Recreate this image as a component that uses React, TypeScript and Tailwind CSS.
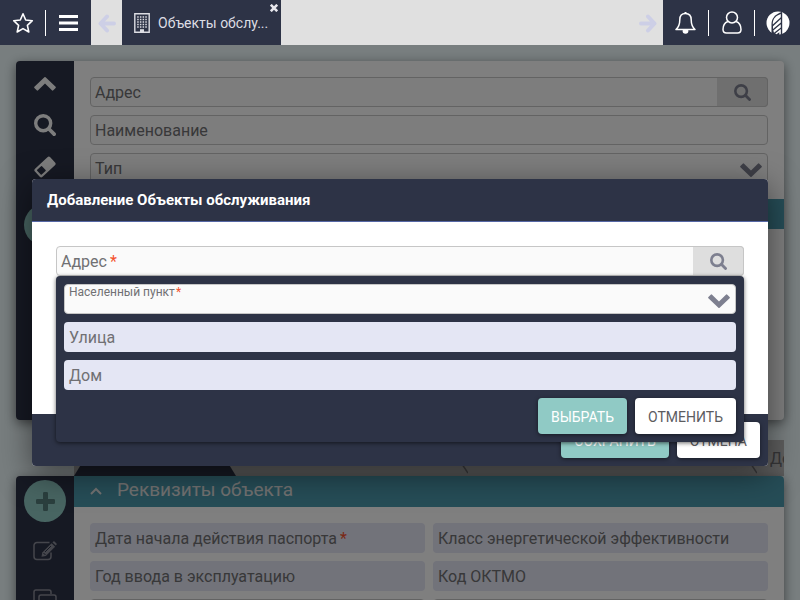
import React from "react";
import { clsx } from "clsx";

const FONT = "font-['Roboto','Noto_Sans',sans-serif]";

type IconProps = { className?: string };

const StarIcon = () => (
  <svg className="size-[22px]" viewBox="0 0 22 22" fill="none" stroke="#fff" strokeWidth="1.600" strokeLinejoin="round">
    <path d="M11 1.800 13.700 8l6.600.7-4.900 4.600 1.400 6.700L11 16.600 5.200 20l1.400-6.700-4.900-4.600L8.300 8Z" />
  </svg>
);

const MenuIcon = () => (
  <svg className="h-4 w-[19px]" viewBox="0 0 19 16" fill="#fff">
    <path d="M0 0h19v3H0zM0 6.500h19v3H0zM0 13h19v3H0z" />
  </svg>
);

const ArrowIcon = ({ className }: IconProps) => (
  <svg className={clsx("h-[19px] w-[18px]", className)} viewBox="0 0 18 19" fill="none" stroke="#cdcfe6" strokeWidth="4" strokeLinecap="round" strokeLinejoin="round">
    <path d="M9 2.500 2.500 9.500 9 16.500M3 9.500h13" />
  </svg>
);

const BuildingIcon = () => (
  <svg className="h-5 w-4" viewBox="0 0 16 20" fill="none" stroke="#dcdde3">
    <path d="M.8.7h14.400v18.600H.8z" strokeWidth="1.400" />
    <path d="M3.200 4h9.600M3.200 6.500h9.600M3.200 9h9.600M3.200 11.500h9.600M3.200 14h9.600" strokeWidth="1.500" strokeDasharray="1.500 1.200" />
    <path d="M6 16.200h4v3H6z" fill="#dcdde3" stroke="none" />
  </svg>
);

const BellIcon = () => (
  <svg className="h-[23px] w-[21px]" viewBox="0 0 21 23" fill="none" stroke="#fff" strokeWidth="1.500" strokeLinejoin="round">
    <path d="M10.500 2.500c-4 0-5.700 2.800-5.700 6.200 0 5.300-1 7.300-3.800 9.800h19c-2.800-2.500-3.800-4.500-3.800-9.800 0-3.400-1.700-6.200-5.700-6.200Z" />
    <path d="M9.500 1h2v1.500h-2z" fill="#fff" stroke="none" />
    <path d="M8.300 19.700a2.200 2.200 0 0 0 4.400 0Z" fill="#fff" />
  </svg>
);

const UserIcon = () => (
  <svg className="h-[23px] w-5" viewBox="0 0 20 23" fill="none" stroke="#fff" strokeWidth="1.500" strokeLinejoin="round">
    <circle cx="10" cy="6.500" r="5.500" />
    <path d="M5.800 10.500C2.500 11.800 1 14.800 1 18.500 1 21 2.200 22 4.500 22h11c2.300 0 3.500-1 3.500-3.500 0-3.700-1.500-6.700-4.800-8" />
  </svg>
);

const LogoIcon = () => (
  <svg className="size-6" viewBox="0 0 24 24">
    <circle cx="12" cy="12" r="11.500" fill="#fff" />
    <path d="M5.500 24V13C5.500 7.500 9 3.500 16.200.8V24" fill="#2d3346" />
    <path d="M6.800 12c.4-4.500 3.200-7.500 8-9v3.200L6.800 13.500ZM7 18v-2.700l7.800-7.200v3.400ZM8 21.800l-.7-2.300 7.500-6.200v3.200ZM10.500 23.300l-1.300-.8 5.600-4.500v5.200l-1.500.4v-2.300Z" fill="#fff" />
  </svg>
);

const SearchIcon = ({ className }: IconProps) => (
  <svg className={className} viewBox="0 0 22 22" fill="none" stroke="currentColor" strokeLinecap="round">
    <circle cx="9.200" cy="9.200" r="7.500" strokeWidth="3.400" />
    <path d="m15 15 5.100 5.100" strokeWidth="3.700" />
  </svg>
);

const ChevronIcon = ({ className }: IconProps) => (
  <svg className={clsx("h-[14px] w-[22px]", className)} viewBox="0 0 22 14" fill="currentColor">
    <path d="M.4 3 2.700.7a1 1 0 0 1 1.400 0L11 7.500 17.900.7a1 1 0 0 1 1.400 0L21.600 3a1 1 0 0 1 0 1.300L11.600 13.700a.9.900 0 0 1-1.200 0L.4 4.300A1 1 0 0 1 .4 3Z" />
  </svg>
);

const EraserIcon = () => (
  <svg className="size-[22px]" viewBox="0 0 20 20">
    <g transform="rotate(-43 10 10)">
      <rect x=".5" y="5" width="19" height="10" rx="1.800" fill="currentColor" />
      <rect x="2.500" y="7" width="6" height="6" rx=".6" fill="#2d3346" />
    </g>
  </svg>
);

const PlusIcon = () => (
  <svg className="size-[19px]" viewBox="0 0 19 19" fill="#577f7c">
    <path d="M7 1.200Q7 0 8.200 0h2.600Q12 0 12 1.200V7h5.800Q19 7 19 8.200v2.600q0 1.200-1.200 1.200H12v5.800q0 1.200-1.200 1.200H8.200Q7 19 7 17.800V12H1.200Q0 12 0 10.800V8.200Q0 7 1.200 7H7Z" />
  </svg>
);

const EditIcon = () => (
  <svg className="h-5 w-6" viewBox="0 0 24 20" fill="none" stroke="currentColor" strokeWidth="1.500">
    <path d="M16.500 1.500H4A3 3 0 0 0 1 4.500v11a3 3 0 0 0 3 3h11a3 3 0 0 0 3-3v-4" />
    <path d="m8.500 15.800.8-4.300L18.600 2.200l3.500 3.500-9.300 9.300Z" fill="currentColor" stroke="none" />
    <path d="m19.500 1.400.8-.8q.6-.5 1.200 0l2 2q.5.600 0 1.200l-.7.8Z" fill="currentColor" stroke="none" />
    <path d="m10.500 12 2 2M12 11l6-6" stroke="#2d3346" strokeWidth="1" />
  </svg>
);

const CopyIcon = () => (
  <svg className="size-6" viewBox="0 0 24 24" fill="none" stroke="currentColor" strokeWidth="1.500">
    <path d="M5 17H3a2 2 0 0 1-2-2V3a2 2 0 0 1 2-2h13a2 2 0 0 1 2 2v2" />
    <rect x="6" y="6" width="17" height="17" rx="2" />
  </svg>
);

type FieldProps = {
  id: string;
  label: string;
  required?: boolean;
  tone?: "outline" | "lilac";
  small?: boolean;
  kind?: "text" | "select" | "search";
};

function Field({ id, label, required, tone = "outline", small, kind = "text" }: FieldProps) {
  const box = clsx(
    "col-start-1 row-start-1 h-[30px] w-full min-w-0 appearance-none rounded px-[5px] outline-none",
    tone === "lilac" ? "bg-[#e4e6f4]" : "border border-[#c6c6c6] bg-[#fafafa]",
  );
  return (
    <div className="grid min-w-0">
      {kind === "select" ? (
        <select id={id} className={box} defaultValue="">
          <option value="" />
        </select>
      ) : (
        <input id={id} type="text" className={box} />
      )}
      <label
        htmlFor={id}
        className={clsx(
          "z-10 col-start-1 row-start-1 flex justify-self-start pl-[5px] whitespace-nowrap text-[#707073]",
          small ? "gap-px self-start text-xs leading-4" : "gap-[3px] self-center pt-[2px] text-base leading-6",
        )}
      >
        {label}
        {required && <span className="text-[#f4512c]">*</span>}
      </label>
      {kind === "select" && (
        <span className="pointer-events-none z-10 col-start-1 row-start-1 self-center justify-self-end pt-1 pr-[6px] text-[#7d7f8f]">
          <ChevronIcon />
        </span>
      )}
      {kind === "search" && (
        <button
          type="button"
          aria-label="Поиск"
          className="z-10 col-start-1 row-start-1 grid w-[51px] place-items-center justify-self-end rounded-r border-y border-r border-[#c6c6c6] bg-[#dedede] text-[#7d7f8f]"
        >
          <SearchIcon className="size-[17px]" />
        </button>
      )}
    </div>
  );
}

function PlusButton() {
  return (
    <button type="button" aria-label="Добавить" className="grid size-[42px] shrink-0 place-items-center rounded-full bg-[#90cac5]">
      <PlusIcon />
    </button>
  );
}

function ActionButton({ children, primary }: { children: React.ReactNode; primary?: boolean }) {
  return (
    <button
      type="button"
      className={clsx(
        "h-9 rounded px-[13px] pt-px text-sm leading-9 shadow-[0_1px_4px_rgba(0,0,0,0.5)]",
        primary ? "bg-[#90cac5] text-white" : "bg-white text-[#5c5c5f]",
      )}
    >
      {children}
    </button>
  );
}

const Divider = () => <span className="h-[26px] w-px bg-white" />;
const headerButton = "grid h-full place-items-center";

function Header() {
  return (
    <header className="flex h-[45px] shrink-0 bg-[#e0e0e0]">
      <div className="flex items-center bg-[#2d3346]">
        <button type="button" aria-label="Избранное" className={clsx(headerButton, "w-[45px]")}><StarIcon /></button>
        <Divider />
        <button type="button" aria-label="Меню" className={clsx(headerButton, "w-[45px]")}><MenuIcon /></button>
      </div>
      <button type="button" aria-label="Назад" className={clsx(headerButton, "w-[31px] pt-[2px]")}><ArrowIcon /></button>
      <div className="relative flex w-[159px] items-center gap-2 bg-[#2d3346] pl-3">
        <BuildingIcon />
        <a href="#objects" className="text-sm text-[#dcdde3]">Объекты обслу...</a>
        <button type="button" aria-label="Закрыть" className="absolute top-1 right-[3px]">
          <svg className="size-2" viewBox="0 0 8 8" stroke="#e8e8ee" strokeWidth="2.600"><path d="m.8.800 6.400 6.400M7.200.8.8 7.200" /></svg>
        </button>
      </div>
      <div className="grow" />
      <button type="button" aria-label="Вперёд" className={clsx(headerButton, "w-[31px] pt-[2px]")}><ArrowIcon className="rotate-180" /></button>
      <div className="flex items-center bg-[#2d3346]">
        <button type="button" aria-label="Уведомления" className={clsx(headerButton, "w-[45px]")}><BellIcon /></button>
        <Divider />
        <button type="button" aria-label="Профиль" className={clsx(headerButton, "w-[45px]")}><UserIcon /></button>
        <Divider />
        <a href="#home" aria-label="Главная" className={clsx(headerButton, "w-[45px]")}><LogoIcon /></a>
      </div>
    </header>
  );
}

const cardShadow = "shadow-[0_3px_12px_rgba(0,0,0,0.5)]";
const iconButton = "grid h-[42px] w-full shrink-0 place-items-center";

function FilterCard() {
  return (
    <section className={clsx("flex h-[359px] shrink-0 overflow-hidden rounded bg-white", cardShadow)}>
      <nav className="flex w-[58px] shrink-0 flex-col items-center bg-[#2d3346] pt-px text-[#fafafa]">
        <button type="button" aria-label="Свернуть" className={clsx(iconButton, "pt-[2px]")}><ChevronIcon className="rotate-180" /></button>
        <button type="button" aria-label="Найти" className={iconButton}><SearchIcon className="size-[22px]" /></button>
        <button type="button" aria-label="Очистить" className={iconButton}><EraserIcon /></button>
        <div className="pt-4"><PlusButton /></div>
      </nav>
      <div className="min-w-0 grow">
        <form className="flex flex-col gap-2 p-4">
          <Field id="filter-address" label="Адрес" kind="search" />
          <Field id="filter-name" label="Наименование" />
          <Field id="filter-type" label="Тип" kind="select" />
        </form>
        <div className="h-[30px] bg-[#4c9aae]" />
      </div>
    </section>
  );
}

function SectionTabs() {
  return (
    <div className="mt-5 ml-[58px] flex h-9 shrink-0 overflow-hidden bg-[#bdbdbd] text-base whitespace-nowrap text-[#6c6c70]">
      <div className="w-[162px] shrink-0 bg-[#2d3346] [clip-path:polygon(22px_0,140px_0,100%_100%,0_100%)]" />
      <svg className="h-9 w-[232px] shrink-0" viewBox="0 0 232 36" fill="none" stroke="#77777a" strokeWidth="1.500"><path d="m210 0 22 33" /></svg>
      <svg className="h-9 w-[289px] shrink-0" viewBox="0 0 289 36" fill="none" stroke="#77777a" strokeWidth="1.500"><path d="m267 0 22 33" /></svg>
      <a href="#docs" className="pl-[13px] leading-[38px]">До</a>
    </div>
  );
}

function DetailsCard() {
  return (
    <section className={clsx("flex grow rounded-t bg-white", cardShadow)}>
      <nav className="flex w-[58px] shrink-0 flex-col items-center gap-2 rounded-tl bg-[#2d3346] pt-1 text-[#8a8c98]">
        <PlusButton />
        <button type="button" aria-label="Изменить" className={iconButton}><EditIcon /></button>
        <button type="button" aria-label="Копировать" className={iconButton}><CopyIcon /></button>
      </nav>
      <div className="min-w-0 grow">
        <h2 className="flex h-[31px] items-center gap-[15px] rounded-tr bg-[#4c9aae] pb-[2px] pl-4 text-[19px] text-[#e4e4e4]">
          <svg className="h-2 w-3" viewBox="0 0 12 8" fill="none" stroke="currentColor" strokeWidth="2"><path d="m1 7 5-5 5 5" /></svg>
          Реквизиты объекта
        </h2>
        <form className="grid grid-cols-2 gap-2 p-4">
          <Field id="passport-date" label="Дата начала действия паспорта" required tone="lilac" />
          <Field id="energy-class" label="Класс энергетической эффективности" tone="lilac" />
          <Field id="year" label="Год ввода в эксплуатацию" tone="lilac" />
          <Field id="oktmo" label="Код ОКТМО" tone="lilac" />
          <Field id="extra-a" label="" />
          <Field id="extra-b" label="" />
        </form>
      </div>
    </section>
  );
}

function AddDialog() {
  return (
    <div role="dialog" aria-labelledby="dialog-title" className="w-full rounded bg-white shadow-[0_8px_32px_rgba(0,0,0,0.5)]">
      <h1 id="dialog-title" className="h-[43px] rounded-t border-b border-[#5567a5] bg-[#2d3346] pl-[15px] text-[15px] leading-[43px] font-bold text-white">
        Добавление Объекты обслуживания
      </h1>
      <div className="h-[192px] p-6">
        <div className="relative">
          <Field id="address" label="Адрес" required kind="search" />
          <form className="absolute inset-x-0 top-full z-20 flex flex-col gap-2 rounded bg-[#2d3346] p-2 shadow-[0_1px_4px_rgba(0,0,0,0.6)]">
            <Field id="city" label="Населенный пункт" required small kind="select" />
            <Field id="street" label="Улица" tone="lilac" />
            <Field id="house" label="Дом" tone="lilac" />
            <div className="flex justify-end gap-2">
              <ActionButton primary>ВЫБРАТЬ</ActionButton>
              <ActionButton>ОТМЕНИТЬ</ActionButton>
            </div>
          </form>
        </div>
      </div>
      <div className="flex justify-end gap-2 rounded-b bg-[#2d3346] p-2">
        <ActionButton primary>СОХРАНИТЬ</ActionButton>
        <ActionButton>ОТМЕНА</ActionButton>
      </div>
    </div>
  );
}

export default function App() {
  return (
    <div className={clsx("flex h-screen flex-col overflow-hidden", FONT)}>
      <Header />
      <main className="relative min-h-0 grow overflow-hidden bg-[#f1fdff]">
        <div className="flex h-full flex-col px-4 pt-4">
          <FilterCard />
          <SectionTabs />
          <DetailsCard />
        </div>
        <div className="absolute inset-0 z-30 flex items-center bg-black/50 px-8">
          <AddDialog />
        </div>
      </main>
    </div>
  );
}
